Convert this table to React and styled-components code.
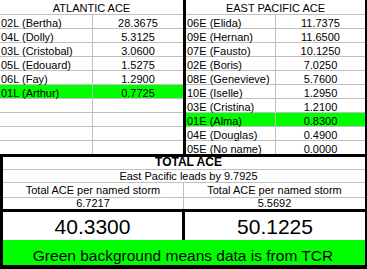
import React from "react";
import styled, { createGlobalStyle } from "styled-components";

const Global = createGlobalStyle`
  html, body { margin: 0; padding: 0; background: #000; }
  body { font-family: "Liberation Sans", Arial, sans-serif; color: #000; }
`;

const Sheet = styled.div`
  width: 367px;
  height: 269px;
  background: #000;
  display: flex;
  flex-direction: column;
  overflow: hidden;
`;

const Top = styled.div`
  display: flex;
  gap: 3px;
  padding-right: 2px;
  padding-bottom: 3px;
`;

const Panel = styled.div`
  width: ${(p) => p.$w}px;
  display: grid;
  grid-template-columns: ${(p) => p.$split}px 1fr;
  grid-template-rows: 14px repeat(10, 13px);
  gap: 1px;
  background: #c0c0c0;
`;

const Head = styled.div`
  grid-column: 1 / -1;
  background: #fff;
  font-size: 11px;
  line-height: 17px;
  text-align: center;
  white-space: nowrap;
`;

const Cell = styled.div`
  background: ${(p) => (p.$green ? "#00ff00" : "#fff")};
  font-size: 11px;
  line-height: 17px;
  height: 13px;
  white-space: nowrap;
  text-align: ${(p) => (p.$num ? "center" : "left")};
  padding-left: ${(p) => (p.$num ? "0" : "1px")};
`;

const Lower = styled.div`
  padding: 0 2px 0 3px;
  display: flex;
  flex-direction: column;
`;

const Totals = styled.div`
  display: grid;
  grid-template-columns: 180px 1fr;
  grid-template-rows: 12px 12px 14px 11px;
  gap: 1px;
  background: #c0c0c0;
`;

const Wide = styled.div`
  grid-column: 1 / -1;
  background: #fff;
  text-align: center;
  white-space: nowrap;
  padding-left: 9px;
  font-size: ${(p) => (p.$bold ? "12px" : "11px")};
  font-weight: ${(p) => (p.$bold ? 700 : 400)};
  line-height: ${(p) => p.$lh}px;
`;

const TCell = styled.div`
  background: #fff;
  text-align: center;
  white-space: nowrap;
  font-size: 11px;
  line-height: ${(p) => p.$lh}px;
`;

const BigRow = styled.div`
  margin-top: 3px;
  display: grid;
  grid-template-columns: 179px 1fr;
  gap: 3px;
  height: 26px;
`;

const Big = styled.div`
  background: #fff;
  text-align: center;
  font-size: 21px;
  line-height: 30px;
  white-space: nowrap;
`;

const Note = styled.div`
  margin-top: 2px;
  height: 25px;
  background: #00ff00;
  text-align: center;
  font-size: 15.5px;
  line-height: 32px;
  white-space: nowrap;
  overflow: hidden;
  padding-right: 2px;
`;

const atlantic = [
  ["02L (Bertha)", "28.3675"],
  ["04L (Dolly)", "5.3125"],
  ["03L (Cristobal)", "3.0600"],
  ["05L (Edouard)", "1.5275"],
  ["06L (Fay)", "1.2900"],
  ["01L (Arthur)", "0.7725", true],
  ["", ""],
  ["", ""],
  ["", ""],
  ["", ""],
];

const pacific = [
  ["06E (Elida)", "11.7375"],
  ["09E (Hernan)", "11.6500"],
  ["07E (Fausto)", "10.1250"],
  ["02E (Boris)", "7.0250"],
  ["08E (Genevieve)", "5.7600"],
  ["10E (Iselle)", "1.2950"],
  ["03E (Cristina)", "1.2100"],
  ["01E (Alma)", "0.8300", true],
  ["04E (Douglas)", "0.4900"],
  ["05E (No name)", "0.0000"],
];

function Table({ title, rows, w, split }) {
  return (
    <Panel $w={w} $split={split}>
      <Head>{title}</Head>
      {rows.map(([name, val, green], i) => (
        <React.Fragment key={i}>
          <Cell $green={green}>{name}</Cell>
          <Cell $green={green} $num>
            {val}
          </Cell>
        </React.Fragment>
      ))}
    </Panel>
  );
}

export default function App() {
  return (
    <>
      <Global />
      <Sheet>
        <Top>
          <Table title="ATLANTIC ACE" rows={atlantic} w={183} split={92} />
          <Table title="EAST PACIFIC ACE" rows={pacific} w={179} split={89} />
        </Top>
        <Lower>
          <Totals>
            <Wide $bold $lh={11}>TOTAL ACE</Wide>
            <Wide $lh={12}>East Pacific leads by 9.7925</Wide>
            <TCell $lh={14}>Total ACE per named storm</TCell>
            <TCell $lh={14}>Total ACE per named storm</TCell>
            <TCell $lh={10}>6.7217</TCell>
            <TCell $lh={10}>5.5692</TCell>
          </Totals>
          <BigRow>
            <Big>40.3300</Big>
            <Big>50.1225</Big>
          </BigRow>
          <Note>Green background means data is from TCR</Note>
        </Lower>
      </Sheet>
    </>
  );
}
